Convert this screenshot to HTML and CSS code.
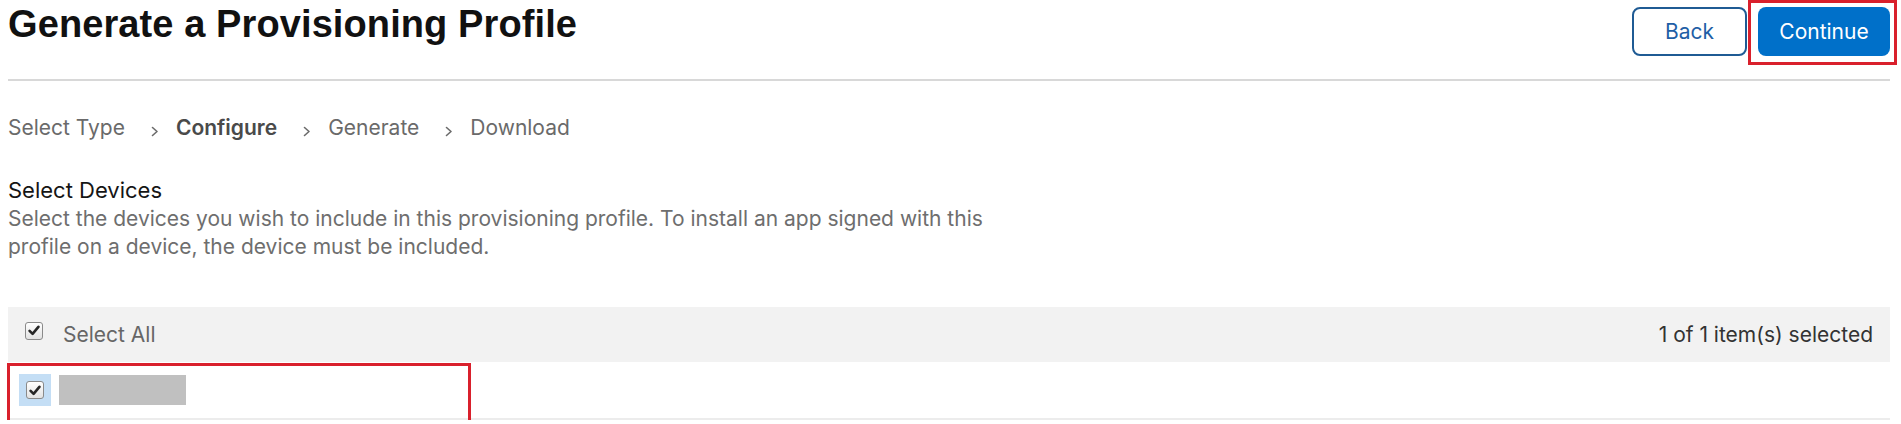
FILE: index.html
```html
<!DOCTYPE html>
<html lang="en">
<head>
<meta charset="utf-8">
<title>Generate a Provisioning Profile</title>
<link rel="stylesheet" href="styles.css">
</head>
<body>
<div class="page">
  <header class="header">
    <h1 class="title">Generate a Provisioning Profile</h1>
    <div class="actions">
      <button class="btn btn-back" type="button">Back</button>
      <button class="btn btn-continue" type="button">Continue</button>
    </div>
  </header>

  <nav class="crumbs">
    <span class="crumb">Select Type</span>
    <svg class="chev" width="8" height="11" viewBox="0 0 8 11"><path d="M1.5 1.5 L6 5.5 L1.5 9.5" fill="none" stroke="#6b6b6b" stroke-width="1.6" stroke-linecap="round" stroke-linejoin="round"/></svg>
    <span class="crumb crumb-active">Configure</span>
    <svg class="chev" width="8" height="11" viewBox="0 0 8 11"><path d="M1.5 1.5 L6 5.5 L1.5 9.5" fill="none" stroke="#6b6b6b" stroke-width="1.6" stroke-linecap="round" stroke-linejoin="round"/></svg>
    <span class="crumb">Generate</span>
    <svg class="chev" width="8" height="11" viewBox="0 0 8 11"><path d="M1.5 1.5 L6 5.5 L1.5 9.5" fill="none" stroke="#6b6b6b" stroke-width="1.6" stroke-linecap="round" stroke-linejoin="round"/></svg>
    <span class="crumb">Download</span>
  </nav>

  <section class="section">
    <h2 class="section-title">Select Devices</h2>
    <p class="section-desc">Select the devices you wish to include in this provisioning profile. To install an app signed with this profile on a device, the device must be included.</p>
  </section>

  <div class="table">
    <div class="row row-head">
      <div class="cell-left">
        <span class="check"><svg width="12" height="11" viewBox="0 0 12 11"><path d="M1.6 5.8 L4.6 8.8 L10.4 1.8" fill="none" stroke="#262626" stroke-width="2.6" stroke-linecap="round" stroke-linejoin="round"/></svg></span>
        <span class="select-all">Select All</span>
      </div>
      <span class="count">1 of 1 item(s) selected</span>
    </div>
    <div class="row row-item">
      <div class="cell-left">
        <span class="focus"><span class="check"><svg width="12" height="11" viewBox="0 0 12 11"><path d="M1.6 5.8 L4.6 8.8 L10.4 1.8" fill="none" stroke="#262626" stroke-width="2.6" stroke-linecap="round" stroke-linejoin="round"/></svg></span></span>
        <span class="redacted"></span>
      </div>
    </div>
  </div>
</div>
</body>
</html>
```

FILE: styles.css
```css
* { box-sizing: border-box; }

body {
  margin: 0;
  background: #ffffff;
  font-family: Inter, "Liberation Sans", Arial, sans-serif;
  color: #1d1d1f;
}

.page {
  padding: 0 11px 0 8px;
}

.header {
  display: flex;
  justify-content: space-between;
  align-items: flex-start;
  height: 81px;
  border-bottom: 2px solid #d8d8d8;
}

.title {
  margin: 2px 0 0 0;
  font-family: "Liberation Sans", Arial, sans-serif;
  font-weight: 700;
  font-size: 38px;
  line-height: 44px;
  letter-spacing: 0.1px;
  color: #111111;
}

.actions {
  display: flex;
  gap: 11px;
  margin-top: 7px;
}

.btn {
  height: 49px;
  border-radius: 8px;
  font-family: Inter, "Liberation Sans", Arial, sans-serif;
  font-size: 21px;
  padding: 0;
  cursor: pointer;
}

.btn-back {
  width: 115px;
  background: #ffffff;
  border: 2px solid #1f5b94;
  color: #1f5fa6;
}

.btn-continue {
  position: relative;
  width: 132px;
  background: #0070c9;
  border: none;
  color: #ffffff;
}

.btn-continue::after {
  content: "";
  position: absolute;
  left: -10px;
  right: -7px;
  top: -7px;
  bottom: -9px;
  border: 3px solid #d9202c;
}

.crumbs {
  display: flex;
  align-items: flex-start;
  margin-top: 33px;
  height: 28px;
  font-size: 21px;
  line-height: 28px;
  color: #6a6a6a;
}

.crumb-active {
  font-weight: 600;
  color: #4a4a4a;
}

.chev {
  margin: 12px 17px 0 26px;
}

.section {
  margin-top: 34px;
}

.section-title {
  margin: 0;
  font-size: 22px;
  font-weight: 400;
  line-height: 29px;
  color: #151515;
}

.section-desc {
  margin: 0;
  width: 1000px;
  font-size: 21px;
  line-height: 28px;
  color: #6e6e6e;
}

.table {
  margin-top: 46px;
}

.row {
  display: flex;
  align-items: center;
  justify-content: space-between;
}

.row-head {
  height: 55px;
  background: #f2f2f2;
  padding: 0 17px;
}

.row-item {
  position: relative;
  height: 58px;
  padding: 0 0 0 11px;
  border-bottom: 2px solid #ececec;
}

.row-item::after {
  content: "";
  position: absolute;
  left: -1px;
  top: 1px;
  width: 458px;
  height: 55px;
  border: 3px solid #d9202c;
}

.cell-left {
  display: flex;
  align-items: center;
}

.check {
  width: 18px;
  height: 18px;
  border: 1px solid #8a8a8a;
  border-radius: 3px;
  background: linear-gradient(#ffffff, #e2e2e2);
  display: flex;
  align-items: center;
  justify-content: center;
}

.row-head .check {
  margin-top: -8px;
}

.select-all {
  margin-left: 20px;
  font-size: 21px;
  line-height: 28px;
  color: #666666;
}

.count {
  font-size: 21px;
  line-height: 28px;
  color: #333333;
}

.focus {
  width: 32px;
  height: 32px;
  background: #c4def5;
  display: flex;
  align-items: center;
  justify-content: center;
}

.redacted {
  margin-left: 8px;
  width: 127px;
  height: 30px;
  background: #c0c0c0;
}
```
